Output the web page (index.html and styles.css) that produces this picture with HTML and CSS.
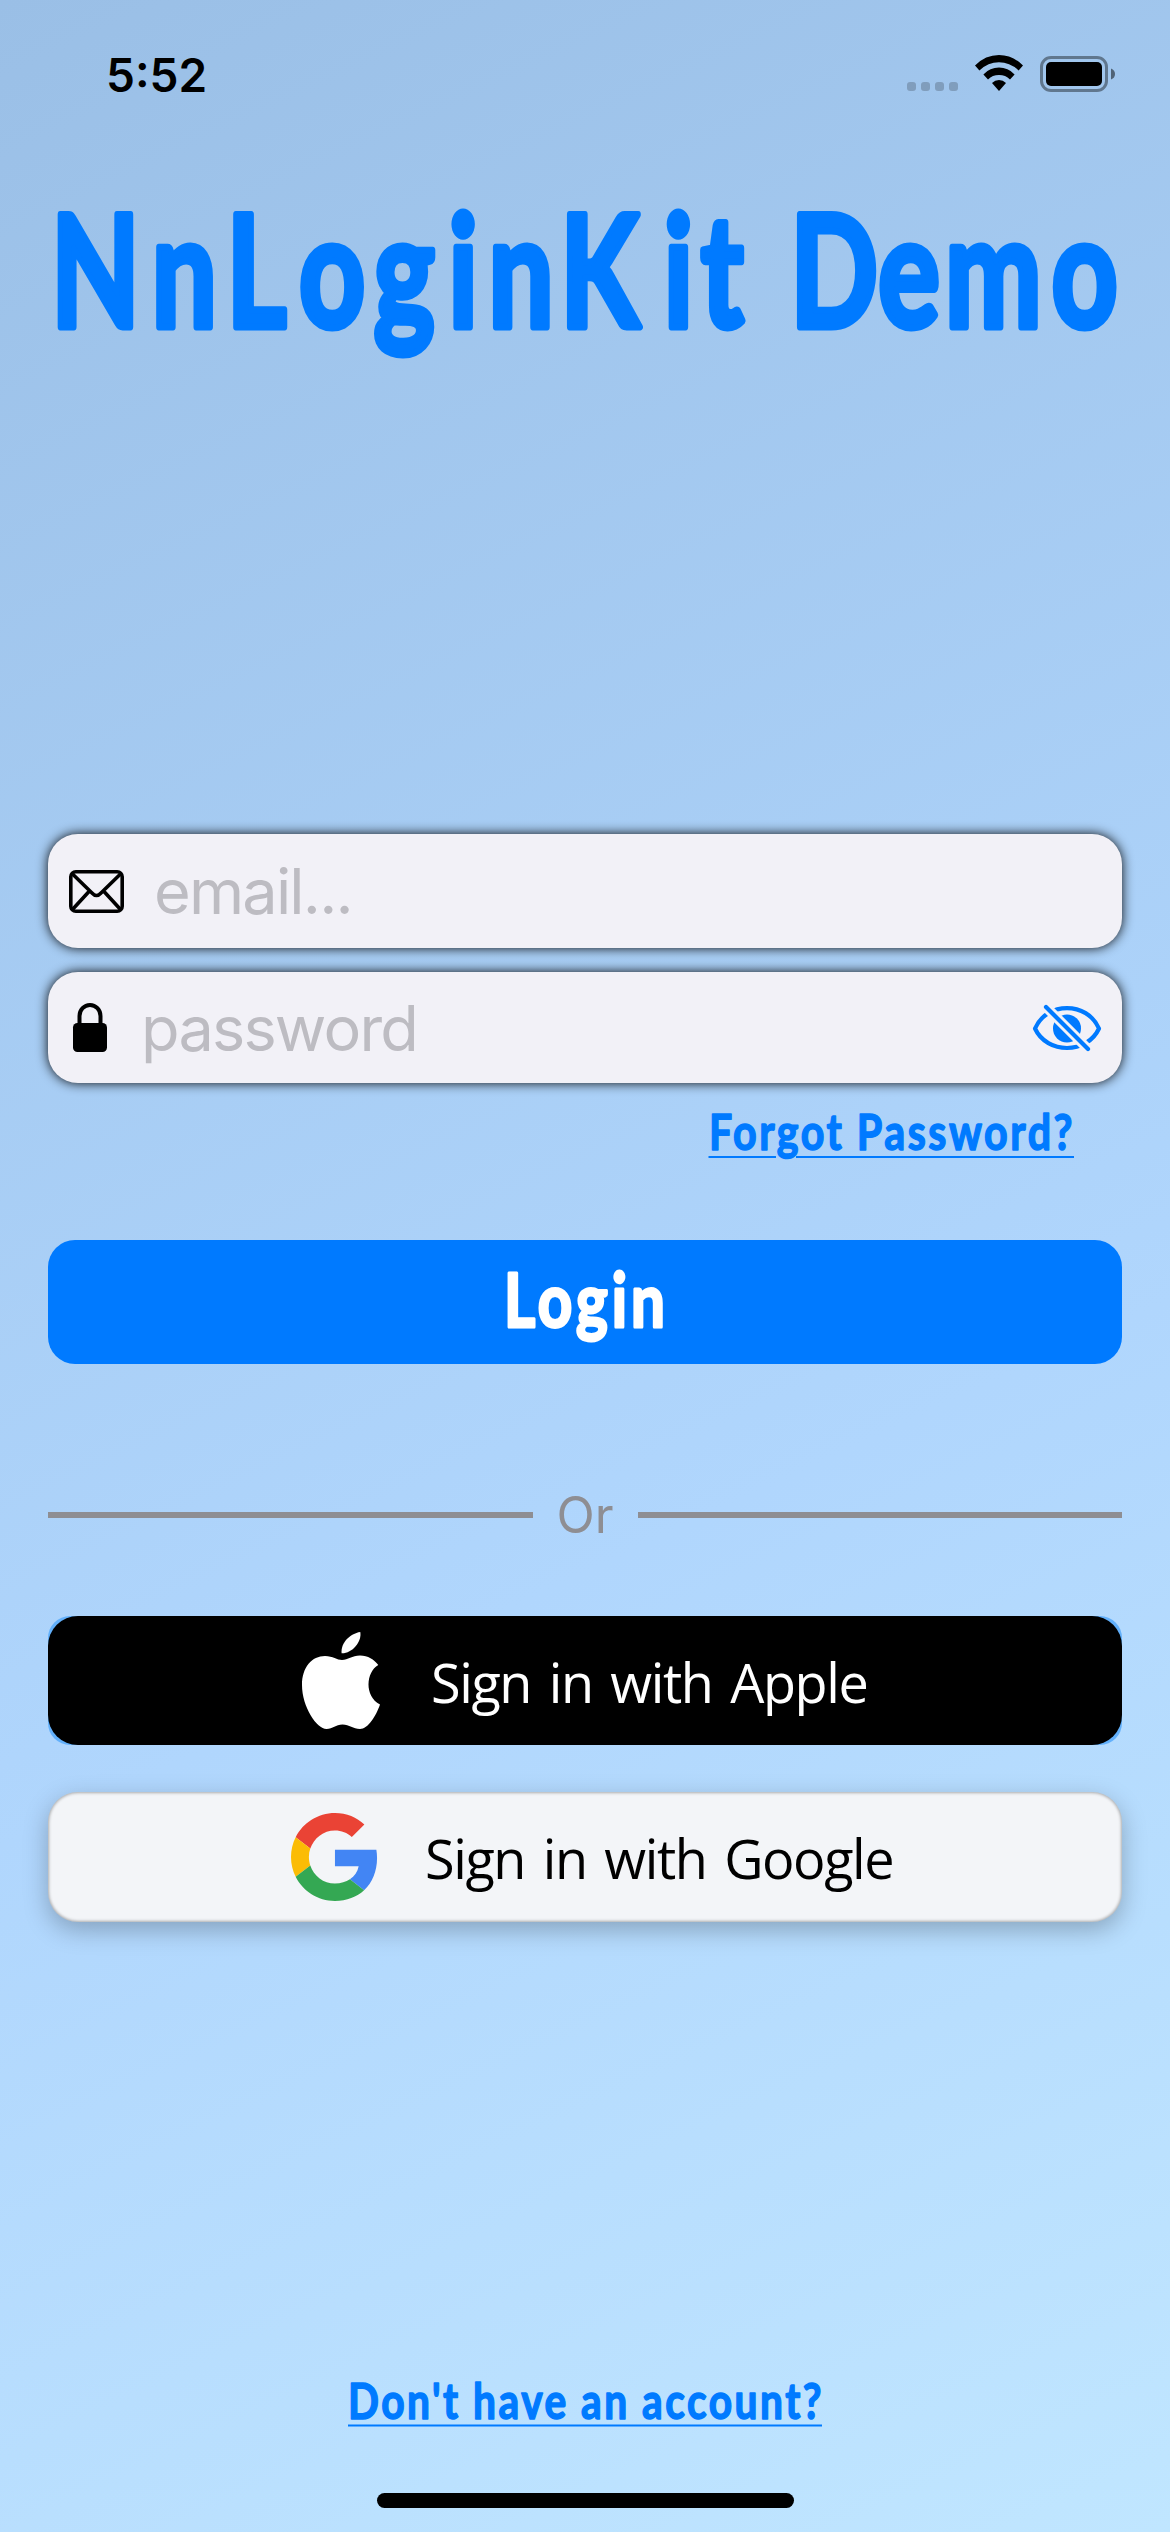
FILE: index.html
```html
<!DOCTYPE html>
<html lang="en">
<head>
<meta charset="utf-8">
<title>NnLoginKit Demo</title>
<link rel="stylesheet" href="styles.css">
</head>
<body>
<main class="screen">
  <header class="status">
    <span class="time">5:52</span>
    <div class="indicators">
      <span class="dots"><i></i><i></i><i></i><i></i></span>
      <svg class="wifi" width="48" height="36" viewBox="0 0 48 36">
        <path d="M0 10.400Q10.500 0 24 0T48 10.400L43.600 15.400Q35 7.200 24 7.200T4.400 15.400Z"/>
        <path d="M8.400 19.400Q15 12.600 24 12.600T39.600 19.400L35 24.400Q30.500 20 24 20T13 24.400Z"/>
        <path d="M17 28Q20 25 24 25T31 28L24 36Z"/>
      </svg>
      <svg class="battery" width="75" height="36" viewBox="0 0 75 36">
        <rect x="1.500" y="1.500" width="65" height="33" rx="9.500" fill="none" stroke="#000" stroke-opacity=".4" stroke-width="3"/>
        <rect x="6" y="6" width="56" height="24" rx="5"/>
        <path d="M71 12.500Q75 14 75 18T71 23.500Z" fill-opacity=".5"/>
      </svg>
    </div>
  </header>

  <h1 class="title">
    <svg width="1170" height="240" viewBox="0 160 1170 240">
      <text class="marker marker-title" transform="scale(.74 1)" y="327" x="69 205 306 404 505 606 660 757 897 947 1040 1068 1187 1277 1421">NnLoginKit Demo</text>
    </svg>
  </h1>

  <form class="form">
    <label class="field field-email">
      <svg class="mail" width="56" height="44" viewBox="0 0 56 44" fill="none" stroke="#000" stroke-width="3.600" stroke-linejoin="round">
        <rect x="1.800" y="1.800" width="51.400" height="39.400" rx="5"/>
        <path d="M3 3.500L23 23Q27.500 28 32 23L52 3.500M3 40L20 21.500M52 40L35 21.500"/>
      </svg>
      <span class="placeholder ph-email">email...</span>
    </label>
    <label class="field field-password">
      <svg class="lock" width="34" height="49" viewBox="0 0 34 49">
        <path d="M6.500 24V13a10.500 11 0 0 1 21 0v11" fill="none" stroke="#000" stroke-width="4"/>
        <rect y="20" width="34" height="29" rx="4.500"/>
      </svg>
      <span class="placeholder ph-password">password</span>
      <svg class="eye" width="68" height="46" viewBox="0 0 68 46">
        <path d="M2 23.500C14 -3.800 54 -3.800 66 23.500C54 49.500 14 49.500 2 23.500Z" fill="none" stroke="#007aff" stroke-width="4.200" stroke-linejoin="round"/>
        <circle cx="34" cy="23.500" r="14" fill="#007aff"/>
        <path d="M13 2L55 44" stroke="#f2f1f7" stroke-width="10"/>
        <path d="M13 2L55 44" stroke="#007aff" stroke-width="4.200" stroke-linecap="round"/>
      </svg>
    </label>
    <a class="forgot">
      <svg width="388" height="76" viewBox="698 1096 388 76">
        <text class="marker marker-link" x="709" y="1150" textLength="366" lengthAdjust="spacingAndGlyphs">Forgot Password?</text>
        <path d="M708.500 1157H776M796 1157H1074" stroke="#007aff" stroke-width="2"/>
      </svg>
    </a>
    <button class="login" type="button">
      <svg width="200" height="120" viewBox="485 1242 200 120">
        <text class="marker marker-login" x="504" y="1327" textLength="165" lengthAdjust="spacingAndGlyphs">Login</text>
      </svg>
    </button>
  </form>

  <div class="divider"><hr><span>Or</span><hr></div>

  <div class="apple-wrap">
    <button class="provider apple" type="button">
      <svg width="78" height="97" viewBox="0 0 78 97" fill="#fff">
        <path d="M58.300 0C60 10 50 21.600 39.600 21.300C38.500 11 48 1.500 58.300 0Z"/>
        <path d="M40 28C46 28 50 23.500 58 23.500C66 23.500 72 27.500 76.300 33C64 40 62 64 78 72.500C74 84 66 97 58 97C51 97 47.500 92.500 40.500 92.500C33.500 92.500 31 97 24.500 97C15 97 0 75 0 53C0 35 10 24 23 24C31 24 35 28 40 28Z"/>
      </svg>
      <span>Sign in with Apple</span>
    </button>
  </div>
  <button class="provider google" type="button">
    <svg width="87" height="88" viewBox="0 0 47.500 48">
      <path fill="#EA4335" d="M24 9.500c3.540 0 6.710 1.220 9.210 3.600l6.850-6.850C35.900 2.380 30.470 0 24 0 14.620 0 6.510 5.380 2.560 13.220l7.980 6.190C12.430 13.720 17.740 9.500 24 9.500z"/>
      <path fill="#4285F4" d="M46.980 24.550c0-1.570-.15-3.090-.38-4.550H24v9.020h12.940c-.58 2.960-2.260 5.480-4.780 7.180l7.730 6c4.510-4.180 7.090-10.360 7.090-17.650z"/>
      <path fill="#FBBC05" d="M10.530 28.590c-.48-1.450-.76-2.990-.76-4.590s.27-3.140.76-4.590l-7.980-6.190C.92 16.460 0 20.120 0 24c0 3.880.92 7.540 2.560 10.780l7.970-6.190z"/>
      <path fill="#34A853" d="M24 48c6.480 0 11.930-2.130 15.890-5.810l-7.730-6c-2.150 1.450-4.920 2.300-8.160 2.300-6.260 0-11.570-4.220-13.470-9.910l-7.980 6.190C6.510 42.620 14.620 48 24 48z"/>
    </svg>
    <span>Sign in with Google</span>
  </button>

  <a class="signup">
    <svg width="496" height="76" viewBox="337 2366 496 76">
      <text class="marker marker-link" x="348" y="2419" textLength="476" lengthAdjust="spacingAndGlyphs">Don't have an account?</text>
      <path d="M348 2425.500H822" stroke="#007aff" stroke-width="2"/>
    </svg>
  </a>
  <div class="home"></div>
</main>
</body>
</html>
```
FILE: styles.css
```css
* { box-sizing: border-box; }
body { margin: 0; }
svg { display: block; flex: none; overflow: visible; }
.screen {
  width: 1170px;
  height: 2532px;
  padding: 0 48px;
  display: flex;
  flex-direction: column;
  font-family: Inter, "Liberation Sans", sans-serif;
  background: linear-gradient(155deg, #9abfe6 0%, #b0d6fd 60%, #c0e6ff 100%);
}
.status {
  height: 160px;
  padding: 56px 7px 0 58px;
  display: flex;
  justify-content: space-between;
  align-items: flex-start;
}
.time { font-size: 46px; line-height: 38px; font-weight: 600; }
.indicators { display: flex; gap: 17px; }
.dots { display: flex; gap: 5px; padding-top: 26px; }
.dots i { width: 9px; height: 9px; border-radius: 3px; background: rgba(0, 0, 0, .2); }
.wifi { margin-top: -1px; }
.title { margin: 0 -48px; height: 240px; }
.marker {
  font-family: "Marker Felt", Lato, sans-serif;
  font-weight: 700;
  fill: #007aff;
  stroke: #007aff;
  stroke-linejoin: round;
}
.marker-title { font-size: 156px; stroke-width: 7px; }
.marker-link { font-size: 49px; stroke-width: 1.500px; letter-spacing: 3px; }
.marker-login { font-size: 74px; fill: #fff; stroke: #fff; stroke-width: 3px; letter-spacing: 5px; }
.form { display: flex; flex-direction: column; margin-top: 434px; }
.field {
  display: flex;
  align-items: center;
  border-radius: 30px;
  background: #f2f1f7;
  box-shadow: 0 0 12px rgba(0, 0, 0, .95);
}
.field-email { height: 114px; padding-left: 21px; gap: 29px; }
.field-password { height: 111px; margin-top: 24px; padding: 0 21px 0 25px; }
.placeholder { color: #bdbcc2; font-size: 63px; line-height: 76px; white-space: nowrap; letter-spacing: -1.800px; }
.ph-password { margin-left: 34px; }
.mail { position: relative; top: 1px; }
.eye { margin-left: auto; }
.forgot { align-self: flex-end; margin: 13px 36px 0 0; }
.login {
  height: 124px;
  margin-top: 68px;
  border: 0;
  border-radius: 27px;
  background: #007aff;
  display: flex;
  justify-content: center;
  align-items: center;
}
.divider { display: flex; align-items: center; height: 60px; margin-top: 121px; }
.divider hr { flex: 1; height: 6px; margin: 0; border: 0; background: #8e8e93; }
.divider span { width: 105px; text-align: center; font-size: 50px; color: #8e8e93; }
.apple-wrap { margin-top: 71px; border-radius: 22px; background: #62b0fb; }
.provider {
  width: 100%;
  border: 0;
  border-radius: 30px;
  display: flex;
  align-items: center;
  white-space: nowrap;
  font-family: "Open Sans", "Noto Sans", sans-serif;
  font-size: 54px;
  letter-spacing: -1.400px;
  word-spacing: 5px;
}
.provider span { padding-top: 2px; }
.apple { height: 129px; padding: 0 0 0 254px; gap: 51px; background: #000; color: #fff; }
.google {
  flex: none;
  height: 130px;
  margin-top: 47px;
  padding: 0 0 0 243px;
  gap: 47px;
  color: #000;
  background: #f3f5f8;
  box-shadow: inset 0 0 3px 1px rgba(0, 0, 0, .3), 0 8px 24px rgba(0, 0, 0, .25);
}
.signup { align-self: center; margin-top: 444px; }
.home { width: 417px; height: 15px; flex: none; margin: 51px auto 0; border-radius: 8px; background: #000; }
```
